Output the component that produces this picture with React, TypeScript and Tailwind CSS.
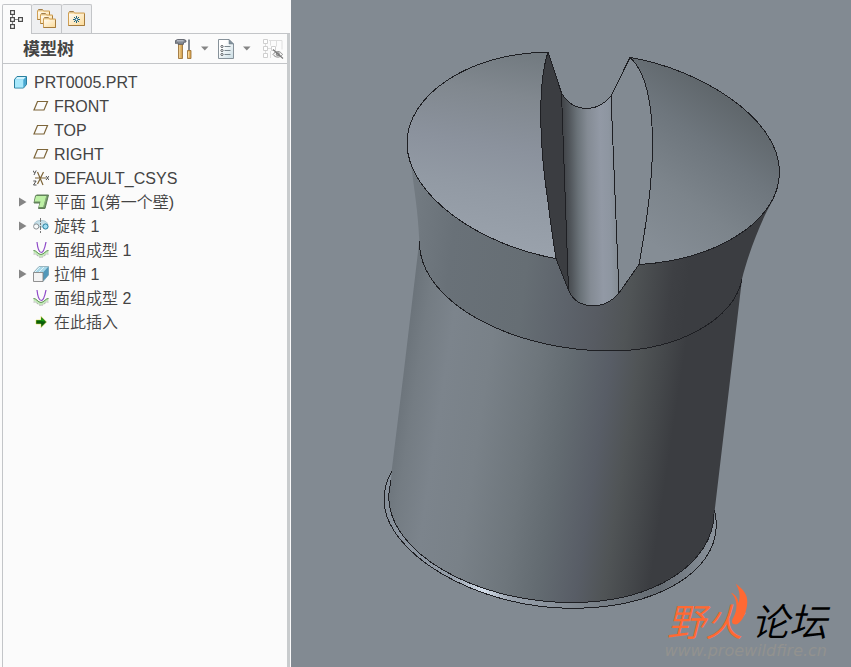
import { useState } from "react";
import type { ReactNode } from "react";

// model edges
const rimLeft = "M548 52 C466 54 407 96 407 143 C407 196 482 246 556 258.5";
const rimRight = "M630 57.5 C700 69 779.5 118 779.5 172 C779.5 222 715 260 639 264.5";
const slotLeft = "M548 52 C536 90 541 155 547.7 200 C550.5 222 553 240 556 258.5";
const slotRight = "M630 57.5 C650 75 652.5 120 652.5 143 C652.5 185 646 225 639 264.5";
const notchTop = "M548 52 L561.5 93 C568 104 577 108.5 587 108.5 C599 108.5 606 102 611 96 L630 57.5";
const notchBottom = "M556 258.5 L568.5 290 C573 301 582 305.7 593 305.7 C605 305.7 612 301 619 293 L639 264.5";
const collarEdge = "M419.3 241 C419 304 515 351 610 351 C680 351 735 318 742 279";
const baseInner = "M391 480 C390 486 388.8 491 388.8 497 C388.8 552 474 602.5 572 602.5 C655 602.5 713 563 714 514";
const baseOuter =
  "M391.7 471.5 C386 481 384 490 384 500 C384 552 475 608.3 572 608.3 C655 608.3 716.3 573 716.3 525 C716.3 518 715.5 514 714.5 510";

// filled faces
const bodyFace = `${collarEdge} L714.5 512 C713 563 655 602.5 572 602.5 C474 602.5 388.8 552 388.8 497 C388.8 491 390 486 391 480 L391.5 472 L404 370 Z`;
const collarFace =
  "M407 143 C407 196 482 246 556 258.5 L568.5 290 C573 301 582 305.7 593 305.7 C605 305.7 612 301 619 293 L639 264.5 C715 260 779.5 222 779.5 172 L773 200 C760 222 748 255 742 279 C735 318 680 351 610 351 C515 351 419 304 419.3 241 C418 210 414 190 411 163 Z";
const dishLeft = `${rimLeft} C553 240 550.5 222 547.7 200 C541 155 536 90 548 52 Z`;
const dishRight = `${rimRight} C646 225 652.5 185 652.5 143 C652.5 120 650 75 630 57.5 Z`;
const wallLeft = `${slotLeft} L568.5 290 L561.5 93 Z`;
const wallRight = `${slotRight} L619 293 L611 96 Z`;
const grooveFace =
  "M561.5 93 C568 104 577 108.5 587 108.5 C599 108.5 606 102 611 96 L619 293 C612 301 605 305.7 593 305.7 C582 305.7 573 301 568.5 290 Z";

function Model() {
  return (
    <svg
      viewBox="291 0 560 667"
      preserveAspectRatio="xMinYMin meet"
      className="block h-full w-full"
      role="img"
      aria-label="PRT0005"
    >
      <defs>
        <linearGradient id="body" gradientUnits="userSpaceOnUse" x1="400" y1="350" x2="740" y2="401">
          <stop offset="0" stopColor="#697178" />
          <stop offset="0.06" stopColor="#747c83" />
          <stop offset="0.14" stopColor="#7c848c" />
          <stop offset="0.26" stopColor="#798188" />
          <stop offset="0.4" stopColor="#6e767c" />
          <stop offset="0.5" stopColor="#636b71" />
          <stop offset="0.61" stopColor="#585d66" />
          <stop offset="0.69" stopColor="#505456" />
          <stop offset="0.76" stopColor="#45484b" />
          <stop offset="0.82" stopColor="#3b3d41" />
        </linearGradient>
        <linearGradient id="collar" gradientUnits="userSpaceOnUse" x1="410" y1="260" x2="740" y2="300">
          <stop offset="0" stopColor="#727a81" />
          <stop offset="0.12" stopColor="#697178" />
          <stop offset="0.35" stopColor="#666e74" />
          <stop offset="0.48" stopColor="#5d636b" />
          <stop offset="0.58" stopColor="#575b62" />
          <stop offset="0.67" stopColor="#505456" />
          <stop offset="0.79" stopColor="#3e4044" />
          <stop offset="0.84" stopColor="#3b3d41" />
        </linearGradient>
        <linearGradient id="dishLeft" gradientUnits="userSpaceOnUse" x1="508" y1="52" x2="475" y2="240">
          <stop offset="0" stopColor="#737b81" />
          <stop offset="0.22" stopColor="#81888f" />
          <stop offset="0.5" stopColor="#8b929d" />
          <stop offset="0.72" stopColor="#929aa4" />
          <stop offset="1" stopColor="#99a1ab" />
        </linearGradient>
        <linearGradient id="dishRight" gradientUnits="userSpaceOnUse" x1="640" y1="235" x2="735" y2="105">
          <stop offset="0" stopColor="#858d95" />
          <stop offset="0.35" stopColor="#7c848b" />
          <stop offset="0.7" stopColor="#6e767d" />
          <stop offset="1" stopColor="#60676c" />
        </linearGradient>
        <linearGradient id="groove" gradientUnits="userSpaceOnUse" x1="564" y1="200" x2="616" y2="199">
          <stop offset="0" stopColor="#414448" />
          <stop offset="0.12" stopColor="#50555a" />
          <stop offset="0.28" stopColor="#6a7278" />
          <stop offset="0.48" stopColor="#848b94" />
          <stop offset="0.72" stopColor="#9299a5" />
          <stop offset="0.88" stopColor="#8e96a1" />
          <stop offset="1" stopColor="#858d95" />
        </linearGradient>
        <linearGradient id="base" gradientUnits="userSpaceOnUse" x1="384" y1="0" x2="717" y2="0">
          <stop offset="0" stopColor="#87909a" />
          <stop offset="0.2" stopColor="#949da8" />
          <stop offset="0.3" stopColor="#d3dde9" />
          <stop offset="0.38" stopColor="#98a1ac" />
          <stop offset="0.6" stopColor="#7d858d" />
          <stop offset="0.82" stopColor="#656c73" />
          <stop offset="1" stopColor="#8c949d" />
        </linearGradient>
      </defs>

      <path d={`${baseOuter} Z`} fill="url(#base)" />
      <path d={bodyFace} fill="url(#body)" />
      <path d={collarFace} fill="url(#collar)" />
      <path d={dishLeft} fill="url(#dishLeft)" />
      <path d={dishRight} fill="url(#dishRight)" />
      <path d={wallLeft} fill="#3b3d41" />
      <path d={wallRight} fill="#828a92" />
      <path d={grooveFace} fill="url(#groove)" />

      <g fill="none" stroke="#1e1f23" strokeWidth="1" strokeLinejoin="round" shapeRendering="crispEdges">
        <path d={rimLeft} />
        <path d={rimRight} />
        <path d={slotLeft} />
        <path d={slotRight} />
        <path d={notchTop} />
        <path d={notchBottom} />
        <path d="M561.5 93 L568.5 290 M611 96 L619 293" />
        <path d={collarEdge} />
        <path d={baseInner} />
        <path d={baseOuter} />
      </g>
    </svg>
  );
}

function Watermark() {
  return (
    <div className="absolute right-6 bottom-2 flex flex-col items-end">
      <div className="relative flex text-[38px] leading-10 font-[350] italic">
        <span className="text-[#ff6933]">野火</span>
        <span className="ml-2 text-black">论坛</span>
        <svg viewBox="0 0 20 42" className="absolute -top-5 left-[62px] h-[42px] w-5" fill="#ff6933" aria-hidden="true">
          <path d="M6.700 0.700C14 6 18.500 11 18.300 19C18 28 14 38 8 41.300C4 42 2 40 3.500 36C6 32 7.500 28 7.500 22C7 16 5 13 2 9.700C6 11 9 15 9.500 20C12 13 10 6 6.700 0.700Z" />
        </svg>
      </div>
      <a href="http://www.proewildfire.cn" className="font-['DejaVu_Sans',sans-serif] text-base leading-4 text-[#92928f] italic">
        www.proewildfire.cn
      </a>
    </div>
  );
}

function TreeTabIcon() {
  return (
    <svg viewBox="0 0 14 20" className="h-5 w-[14px]" fill="#fff" stroke="#4a4a4a" strokeWidth="1.2" aria-hidden="true">
      <path d="M2.5 4v12M4 9.500h5" stroke="#8a8a8a" />
      <rect x="0.600" y="0.600" width="3.800" height="3.800" />
      <rect x="0.600" y="7.600" width="3.800" height="3.800" />
      <rect x="0.600" y="14.600" width="3.800" height="3.800" />
      <rect x="8.600" y="7.600" width="3.800" height="3.800" />
    </svg>
  );
}

function Folder({ x, y, w, h }: { x: number; y: number; w: number; h: number }) {
  return (
    <g transform={`translate(${x} ${y})`}>
      <path d={`M0.500 ${h - 0.5}V2l1-1.500h4l1 1.500h${w - 7}V${h - 0.5}Z`} fill="#fbe3b0" stroke="#cf9f55" />
      <path d="M1.500 0.800h4" stroke="#8c6f48" />
      <path d={`M1 3h${w - 2}v${h - 4}H1Z`} fill="url(#folder)" />
      <path d={`M0.500 ${h - 0.5}h${w - 1}V3`} fill="none" stroke="#a67c3d" />
    </g>
  );
}

function FoldersIcon() {
  return (
    <svg viewBox="0 0 20 20" className="size-5" aria-hidden="true">
      <defs>
        <linearGradient id="folder" x1="0" y1="0" x2="1" y2="1">
          <stop offset="0" stopColor="#fffaf0" />
          <stop offset="1" stopColor="#fcdc9c" />
        </linearGradient>
      </defs>
      <Folder x={0} y={0} w={13} h={11} />
      <Folder x={3} y={4} w={13} h={11} />
      <Folder x={6} y={8} w={13} h={11} />
    </svg>
  );
}

function FavoritesIcon() {
  return (
    <svg viewBox="0 0 18 16" className="h-4 w-[18px]" aria-hidden="true">
      <Folder x={0} y={0} w={17} h={15} />
      <path d="M8.500 5v7M5 8.500h7M6 6l5 5M11 6l-5 5" stroke="#1c6482" />
      <circle cx="8.500" cy="8.500" r="1" fill="#fff" />
    </svg>
  );
}

function ToolsIcon() {
  return (
    <svg viewBox="0 0 18 20" className="h-5 w-[18px]" aria-hidden="true">
      <path d="M3.500 5h4v14.500h-4z" fill="#d9a95a" stroke="#94692f" strokeWidth="0.800" />
      <path d="M4.800 6v13" stroke="#f8dda4" />
      <path d="M0.500 4.500V1.500l2-1h6.500l2 1v1.500l-2.500 0.500v1.800H3V4L0.500 4.500Z" fill="#858b95" stroke="#545760" strokeWidth="0.800" />
      <path d="M2 1.800h6.500" stroke="#c6cbd4" />
      <path d="M14 0.500v11" stroke="#777e88" strokeWidth="1.800" />
      <path d="M12.500 11.500h3.500v8h-3.500z" fill="#dda753" stroke="#94692f" strokeWidth="0.800" />
      <path d="M13.700 12.500v6" stroke="#fae1aa" />
    </svg>
  );
}

function SettingsIcon() {
  return (
    <svg viewBox="0 0 18 20" className="h-5 w-[18px]" aria-hidden="true">
      <defs>
        <linearGradient id="sheet" x1="0" y1="0" x2="1" y2="1">
          <stop offset="0.300" stopColor="#ffffff" />
          <stop offset="1" stopColor="#c9dce3" />
        </linearGradient>
      </defs>
      <path d="M1.500 0.500h10.500l4.500 4.500v14.500h-15z" fill="url(#sheet)" stroke="#87929a" />
      <path d="M12 0.500v4.500h4.500z" fill="#83929c" stroke="#6f7e88" strokeWidth="0.500" />
      <path d="M7.500 7.500h6M7.500 11.500h6M7.500 15.500h6" stroke="#7b878e" />
      <g fill="#fff" stroke="#4f5559" strokeWidth="0.900">
        <circle cx="5" cy="7.500" r="1.100" />
        <circle cx="5" cy="11.500" r="1.100" />
        <circle cx="5" cy="15.500" r="1.100" />
      </g>
    </svg>
  );
}

function HiddenTreeIcon() {
  return (
    <svg viewBox="0 0 21 20" className="h-5 w-[21px]" fill="none" stroke="#cfcfcf" aria-hidden="true">
      <path d="M2.500 4v12M4 9.500h5M6 1.500h13v9M7.500 1.500v5M13.500 1.500v6M7.500 12v7" stroke="#dedede" />
      <path d="M0.500 0.500h4v4h-4zM0.500 7.500h4v4h-4zM0.500 14.500h4v4h-4zM8.500 7.500h4v4h-4z" fill="#fff" />
      <path d="M10 15.500c2.500-4 7-4 9.500 0c-2.500 3.500-7 3.500-9.500 0Z" fill="#f1f1f1" stroke="#8d8d8d" />
      <circle cx="14.800" cy="15.200" r="1.500" fill="#b5b5b5" stroke="#858585" />
      <path d="M10 10.500l10 9" stroke="#777" strokeWidth="1.100" />
    </svg>
  );
}

function MenuArrow({ label }: { label: string }) {
  return (
    <button type="button" aria-label={label}>
      <svg viewBox="0 0 8 5" className="h-[5px] w-2" fill="#858585" aria-hidden="true">
        <path d="M0 0.500h7.500L3.750 4.500Z" />
      </svg>
    </button>
  );
}

function PartIcon() {
  return (
    <svg viewBox="0 0 16 16" className="size-4" aria-hidden="true">
      <path d="M1.500 5.500L4 2.500h9.500v8L10.500 14h-9z" fill="#67c5ea" stroke="#2a7f9e" strokeLinejoin="round" />
      <path d="M2 5.800h8.300v7.700H2z" fill="#a8e8fb" />
      <path d="M2.200 5.500L4.300 3h8.500l-2.300 2.500z" fill="#d3f4fd" />
      <path d="M10.500 5.800L13 3v7.200l-2.500 3z" fill="#4aa7d0" />
    </svg>
  );
}

function PlaneIcon() {
  return (
    <svg viewBox="0 0 16 16" className="size-4" fill="none" stroke="#7d6539" strokeWidth="1.200" aria-hidden="true">
      <path d="M4.500 3.500h10l-3.500 8.500h-10z" />
    </svg>
  );
}

function CsysIcon() {
  return (
    <svg viewBox="0 0 16 16" className="size-4" fill="none" aria-hidden="true">
      <path d="M2 8h11M4.500 2l5.500 13M10.500 2L4.500 14" stroke="#7d6539" strokeWidth="1.200" />
      <path d="M0 0.500l1.500 2.500M3.200 0.500L1 5M0.300 11h2.800L0.500 15h3M13 6l3 4M16 6l-3 4" stroke="#3f3f3f" strokeWidth="0.900" />
    </svg>
  );
}

function WallIcon() {
  return (
    <svg viewBox="0 0 16 16" className="size-4" aria-hidden="true">
      <path d="M2.500 2l1-1h12L12 14.500H5.500L7 9H1z" fill="#698c5f" stroke="#5f7e58" strokeLinejoin="round" />
      <path d="M3 2h10.300l-3 11H6l1.500-5.500H1.500z" fill="#bdf0a5" />
      <path d="M13.800 2L10.800 13" fill="none" stroke="#8fb582" strokeWidth="0.800" />
    </svg>
  );
}

function RevolveIcon() {
  return (
    <svg viewBox="0 0 16 16" className="size-4" aria-hidden="true">
      <path d="M1 7C2 3 5 2.500 8 2.500S14 3 15 7L11 9H5Z" fill="#c5dfe8" stroke="#9dbfcb" strokeWidth="0.800" />
      <circle cx="3.200" cy="8.500" r="2.600" fill="#f7fafb" stroke="#8b8f92" />
      <circle cx="12.500" cy="8.500" r="2.600" fill="#9eddf2" stroke="#287f9e" />
      <path d="M7.500 0v16" stroke="#777" strokeDasharray="4 1 2 1" />
    </svg>
  );
}

function QuiltIcon() {
  return (
    <svg viewBox="0 0 16 16" className="size-4" fill="none" aria-hidden="true">
      <path d="M0.500 9.500c3 0 5 4.500 7.500 4.500s4.500-4.500 7.500-4.500" stroke="#c3eab8" strokeWidth="2.500" />
      <path d="M0.500 8.500C3 8 5 12.500 8 12.500s5-4.500 7.500-4" stroke="#5c8d52" />
      <path d="M0.500 12c3-0.500 5 3.500 7.500 3.500s4.500-4 7.500-3.500" stroke="#a8a8a8" strokeDasharray="2 1" />
      <path d="M4 0c0.500 5 1.500 10.500 4.300 10.500S12 5 13 0" stroke="#8e49c8" strokeWidth="1.200" />
    </svg>
  );
}

function ExtrudeIcon() {
  return (
    <svg viewBox="0 0 16 16" className="size-4" aria-hidden="true">
      <path d="M0.500 6.500L6 0.500h9.500V9L10 15.500z" fill="#a7d7e8" stroke="#8ba8b3" strokeWidth="0.800" />
      <path d="M10 6.500l5.500-6V9L10 15z" fill="#5298b9" />
      <path d="M2 6l5-5M6 6l5-5" stroke="#e0f3f8" />
      <path d="M0.500 6.500h9.500v9H0.500z" fill="#f3f3f3" stroke="#858585" strokeWidth="0.900" />
    </svg>
  );
}

function InsertIcon() {
  return (
    <svg viewBox="0 0 16 16" className="size-4" aria-hidden="true">
      <path d="M3 6h5V2.500l5.500 5.500L8 13.500V10H3z" fill="#0b5d0b" stroke="#dcdc35" strokeWidth="0.500" />
      <path d="M3.500 6.500h5V4l3.500 3.500z" fill="#12a312" />
    </svg>
  );
}

type TreeItem = { label: string; icon: ReactNode; expandable?: boolean };

const items: TreeItem[] = [
  { label: "FRONT", icon: <PlaneIcon /> },
  { label: "TOP", icon: <PlaneIcon /> },
  { label: "RIGHT", icon: <PlaneIcon /> },
  { label: "DEFAULT_CSYS", icon: <CsysIcon /> },
  { label: "平面 1(第一个壁)", icon: <WallIcon />, expandable: true },
  { label: "旋转 1", icon: <RevolveIcon />, expandable: true },
  { label: "面组成型 1", icon: <QuiltIcon /> },
  { label: "拉伸 1", icon: <ExtrudeIcon />, expandable: true },
  { label: "面组成型 2", icon: <QuiltIcon /> },
  { label: "在此插入", icon: <InsertIcon /> },
];

const tabs = [
  { id: "model", label: "模型树", icon: <TreeTabIcon /> },
  { id: "folders", label: "文件夹浏览器", icon: <FoldersIcon /> },
  { id: "favorites", label: "收藏夹", icon: <FavoritesIcon /> },
];

function Navigator() {
  const [active, setActive] = useState("model");

  return (
    <aside className="flex w-[291px] shrink-0 flex-col bg-[#fbfbfb] pt-1 pr-px pl-[2px]">
      <div role="tablist" className="flex h-[30px] shrink-0 border-b border-[#c3c5c8]">
        {tabs.map((tab) => (
          <button
            key={tab.id}
            type="button"
            role="tab"
            aria-label={tab.label}
            aria-selected={active === tab.id}
            onClick={() => setActive(tab.id)}
            className={
              active === tab.id
                ? "-mb-px flex w-[30px] items-center justify-center rounded-t-xs border-x border-t border-[#c3c5c8] bg-[#fbfbfb]"
                : "flex w-[30px] items-center justify-center rounded-t-xs border-t border-r border-[#c3c5c8] bg-[#eeeff1]"
            }
          >
            {tab.icon}
          </button>
        ))}
      </div>

      <div className="flex flex-1 flex-col border-r-3 border-l border-r-[#c8cbcd] border-l-[#c3c5c8]">
        <header className="flex h-[30px] shrink-0 items-center gap-2 border-b border-[#c3c5c8] pr-[3px] pl-5">
          <h1 className="mr-auto pt-0.5 text-[17px] leading-6 font-bold text-[#444]">模型树</h1>
          <button type="button" aria-label="设置">
            <ToolsIcon />
          </button>
          <MenuArrow label="设置菜单" />
          <button type="button" aria-label="显示">
            <SettingsIcon />
          </button>
          <MenuArrow label="显示菜单" />
          <button type="button" aria-label="隐藏" className="ml-1">
            <HiddenTreeIcon />
          </button>
        </header>

        <div className="pt-[6px] text-base leading-6 font-[350] text-[#444]">
          <div className="flex h-6 items-center gap-[5px] pl-[10px]">
            <PartIcon />
            <span className="pt-0.5">PRT0005.PRT</span>
          </div>
          <ul>
            {items.map((item) => (
              <li key={item.label} className="flex h-6 items-center gap-[5px] pl-[15px]">
                <span className="flex w-[10px]">
                  {item.expandable && (
                    <button type="button" aria-label={item.label}>
                      <svg viewBox="0 0 10 10" className="size-[10px]" fill="#858585" aria-hidden="true">
                        <path d="M1 0.500v9L8.500 5Z" />
                      </svg>
                    </button>
                  )}
                </span>
                {item.icon}
                <span className="pt-0.5">{item.label}</span>
              </li>
            ))}
          </ul>
        </div>
      </div>
    </aside>
  );
}

export default function App() {
  return (
    <div className="flex h-screen font-['Liberation_Sans','Noto_Sans_CJK_SC',sans-serif]">
      <Navigator />
      <main className="relative min-w-0 flex-1 bg-[#828a92]">
        <Model />
        <Watermark />
      </main>
    </div>
  );
}
